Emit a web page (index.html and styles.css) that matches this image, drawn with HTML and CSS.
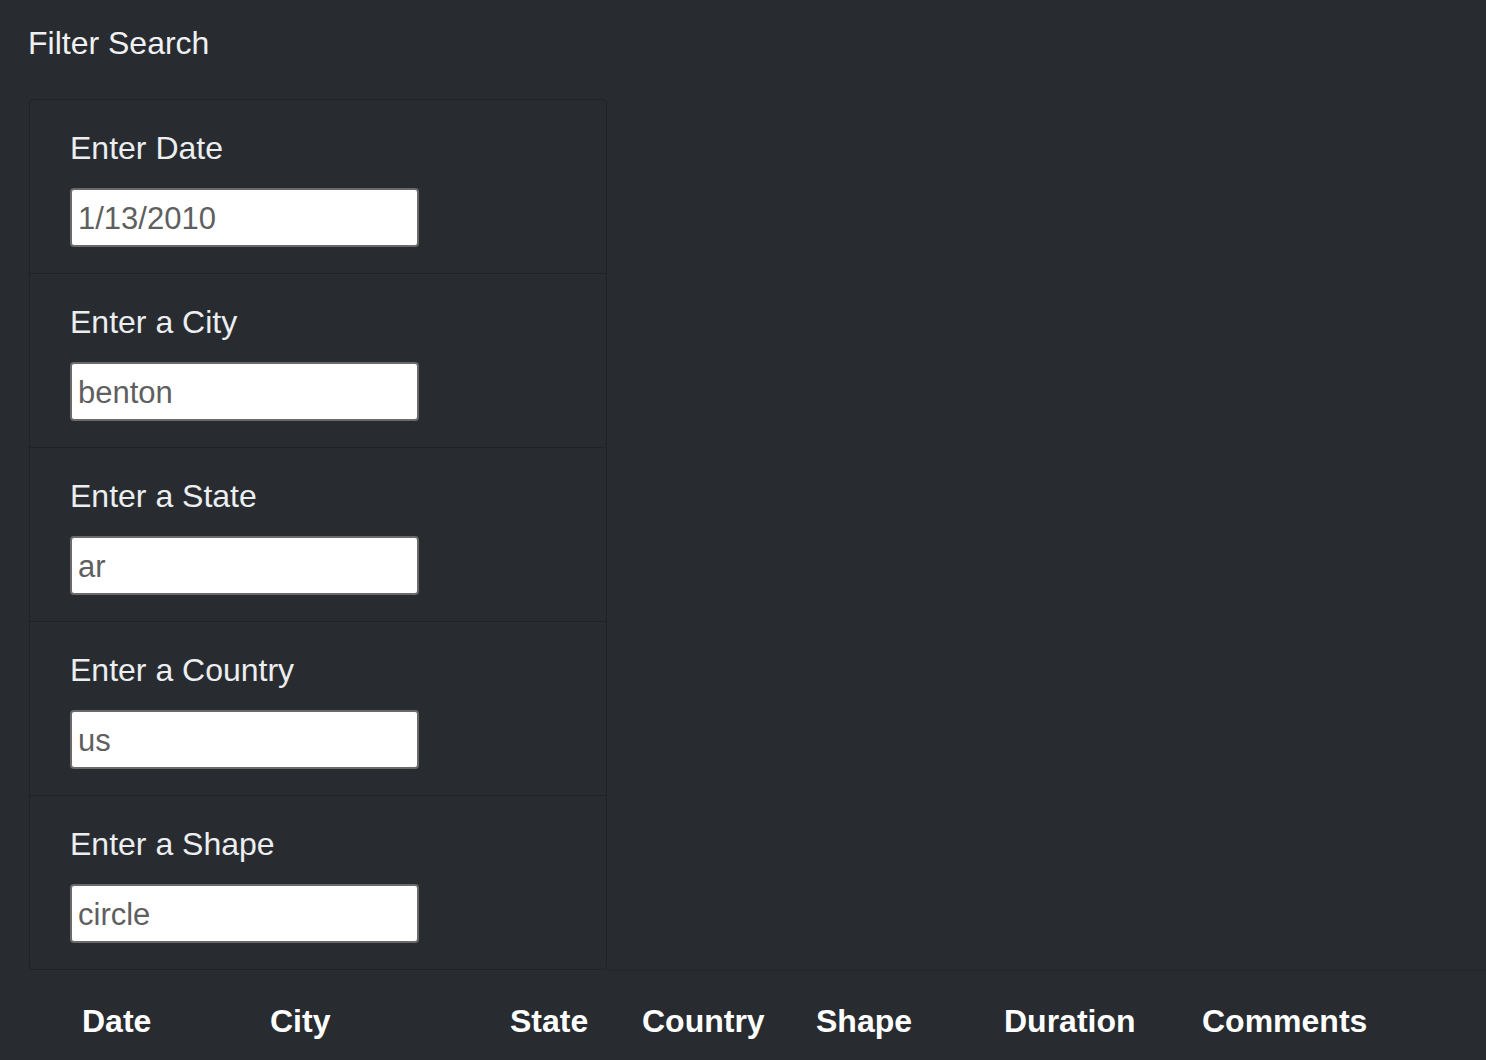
FILE: index.html
```html
<!DOCTYPE html>
<html lang="en">
<head>
<meta charset="utf-8">
<title>Filter Search</title>
<link rel="stylesheet" href="styles.css">
</head>
<body>
  <h1 class="title">Filter Search</h1>
  <div class="row">
    <ul class="filters">
      <li class="filter-item">
        <label class="filter-label" for="date">Enter Date</label>
        <input class="filter-input" id="date" type="text" value="1/13/2010">
      </li>
      <li class="filter-item">
        <label class="filter-label" for="city">Enter a City</label>
        <input class="filter-input" id="city" type="text" value="benton">
      </li>
      <li class="filter-item">
        <label class="filter-label" for="state">Enter a State</label>
        <input class="filter-input" id="state" type="text" value="ar">
      </li>
      <li class="filter-item">
        <label class="filter-label" for="country">Enter a Country</label>
        <input class="filter-input" id="country" type="text" value="us">
      </li>
      <li class="filter-item">
        <label class="filter-label" for="shape">Enter a Shape</label>
        <input class="filter-input" id="shape" type="text" value="circle">
      </li>
    </ul>
    <div class="spacer"></div>
  </div>
  <table class="results">
    <thead>
      <tr>
        <th class="c-date">Date</th>
        <th class="c-city">City</th>
        <th class="c-state">State</th>
        <th class="c-country">Country</th>
        <th class="c-shape">Shape</th>
        <th class="c-duration">Duration</th>
        <th class="c-comments">Comments</th>
      </tr>
    </thead>
    <tbody></tbody>
  </table>
</body>
</html>
```
FILE: styles.css
```css
html, body {
  margin: 0;
  background: #282c31;
}
body {
  padding: 24px 0 0 29px;
  font-family: "Liberation Sans", Arial, sans-serif;
  color: #eceef0;
  overflow: hidden;
}
.title {
  margin: 0 0 37px -1px;
  font-size: 32px;
  line-height: 38px;
  font-weight: 400;
  color: #f0f1f2;
}
.row {
  display: flex;
}
.filters {
  list-style: none;
  margin: 0;
  padding: 0;
  width: 578px;
  box-sizing: border-box;
  border: 1px solid #1f2226;
  border-radius: 4px;
}
.filter-item {
  display: flex;
  flex-direction: column;
  align-items: flex-start;
  padding: 29px 40px 26px;
  border-top: 1px solid #1f2226;
}
.filter-item:first-child {
  border-top: 0;
}
.filter-label {
  font-size: 32px;
  line-height: 38px;
  color: #eceef0;
}
.filter-input {
  margin-top: 21px;
  width: 349px;
  height: 59px;
  box-sizing: border-box;
  border: 2px solid #6a6a6a;
  border-radius: 4px;
  background: #fff;
  padding: 2px 6px 0;
  font-family: "Liberation Sans", Arial, sans-serif;
  font-size: 31px;
  color: #5f5f5f;
  outline: none;
}
.spacer {
  flex: 1;
  border-bottom: 1px solid #22262a;
  margin-bottom: -1px;
}
.results {
  border-collapse: collapse;
  margin: 32px 0 0 0;
}
.results th {
  text-align: left;
  font-size: 32px;
  line-height: 38px;
  font-weight: 700;
  color: #ffffff;
  padding: 0;
  white-space: nowrap;
}
.c-date { width: 188px; padding-left: 53px !important; }
.c-city { width: 240px; }
.c-state { width: 132px; }
.c-country { width: 174px; }
.c-shape { width: 188px; }
.c-duration { width: 198px; }
.c-comments { width: 260px; }
```
